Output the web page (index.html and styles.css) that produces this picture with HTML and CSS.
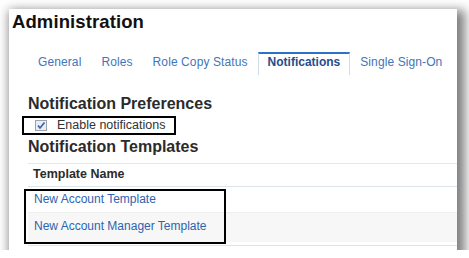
FILE: index.html
```html
<!DOCTYPE html>
<html>
<head>
<meta charset="utf-8">
<link rel="stylesheet" href="styles.css">
</head>
<body>
<div class="panel">
  <h1 class="title">Administration</h1>
  <div class="tabs">
    <a class="tab">General</a>
    <a class="tab">Roles</a>
    <a class="tab">Role Copy Status</a>
    <a class="tab active">Notifications</a>
    <a class="tab">Single Sign-On</a>
  </div>
  <div class="content">
    <h2 class="heading">Notification Preferences</h2>
    <label class="enable">
      <svg class="cb" width="12" height="11" viewBox="0 0 12 11">
        <rect x="0.5" y="0.5" width="11" height="10" fill="#e9eef5" stroke="#9aa4b0"/>
        <path d="M3 5.5 L5 8 L9.5 2.5" fill="none" stroke="#3a5fa8" stroke-width="1.6"/>
      </svg>
      <span>Enable notifications</span>
    </label>
    <h2 class="heading heading2">Notification Templates</h2>
    <div class="table">
      <div class="th">Template Name</div>
      <div class="rows">
        <div class="row"><a class="link">New Account Template</a></div>
        <div class="row alt"><a class="link">New Account Manager Template</a></div>
        <div class="mark"></div>
      </div>
      <div class="endline"></div>
    </div>
  </div>
</div>
</body>
</html>
```
FILE: styles.css
```css
html, body {
  margin: 0;
  padding: 0;
  background: #ffffff;
  font-family: "Liberation Sans", Arial, sans-serif;
  overflow: hidden;
}
.panel {
  margin: 9px 0 0 9px;
  width: 448px;
  height: 241px;
  background: #fff;
  box-shadow: 4px 5px 10px 4px rgba(0,0,0,0.5);
  overflow: hidden;
}
.title {
  margin: 0;
  padding: 3px 0 0 3px;
  font-size: 18.5px;
  line-height: 20px;
  font-weight: bold;
  color: #111;
  letter-spacing: 0.1px;
}
.tabs {
  display: flex;
  margin-top: 20px;
  padding-left: 19px;
}
.tab {
  display: block;
  flex: none;
  white-space: nowrap;
  padding: 1px 9px 5px;
  border: 1px solid transparent;
  border-top: 2px solid transparent;
  border-bottom: 0;
  font-size: 12px;
  line-height: 15px;
  letter-spacing: 0.1px;
  color: #4275ba;
}
.tab.active {
  border-color: #d3dde7;
  border-top-color: #2b72c9;
  font-weight: bold;
  letter-spacing: 0;
  color: #234e8c;
}
.content {
  padding-left: 19px;
}
.heading {
  margin: 20px 0 0 0;
  font-size: 16px;
  line-height: 18px;
  font-weight: bold;
  color: #2b2b2b;
  white-space: nowrap;
}
.enable {
  display: flex;
  align-items: center;
  box-sizing: border-box;
  width: 154px;
  margin: 3px 0 0 -6px;
  padding-left: 11px;
  border: 2px solid #000;
  font-size: 12.5px;
  line-height: 15px;
  color: #333;
  white-space: nowrap;
}
.cb {
  display: block;
  margin-right: 10px;
}
.heading2 {
  margin-top: 3px;
  padding-bottom: 7px;
  border-bottom: 1px solid #e4e8ec;
}
.th {
  padding: 3px 0 4px 5px;
  font-size: 12.5px;
  line-height: 15px;
  font-weight: bold;
  color: #2b2b2b;
  border-bottom: 1px solid #dce4ec;
}
.rows {
  position: relative;
}
.row {
  padding: 5px 0 5px 6px;
  font-size: 12px;
  line-height: 15px;
  border-bottom: 1px solid #eeeeee;
  white-space: nowrap;
}
.row.alt {
  padding: 6px 0 8px 6px;
  background: #f7f7f7;
  border-bottom: 0;
}
.link {
  color: #2d63b0;
}
.mark {
  position: absolute;
  left: -4px;
  top: 2px;
  width: 198px;
  height: 51px;
  border: 2px solid #000;
}
.endline {
  margin-top: 3px;
  border-top: 1px solid #dde4ea;
}
```
